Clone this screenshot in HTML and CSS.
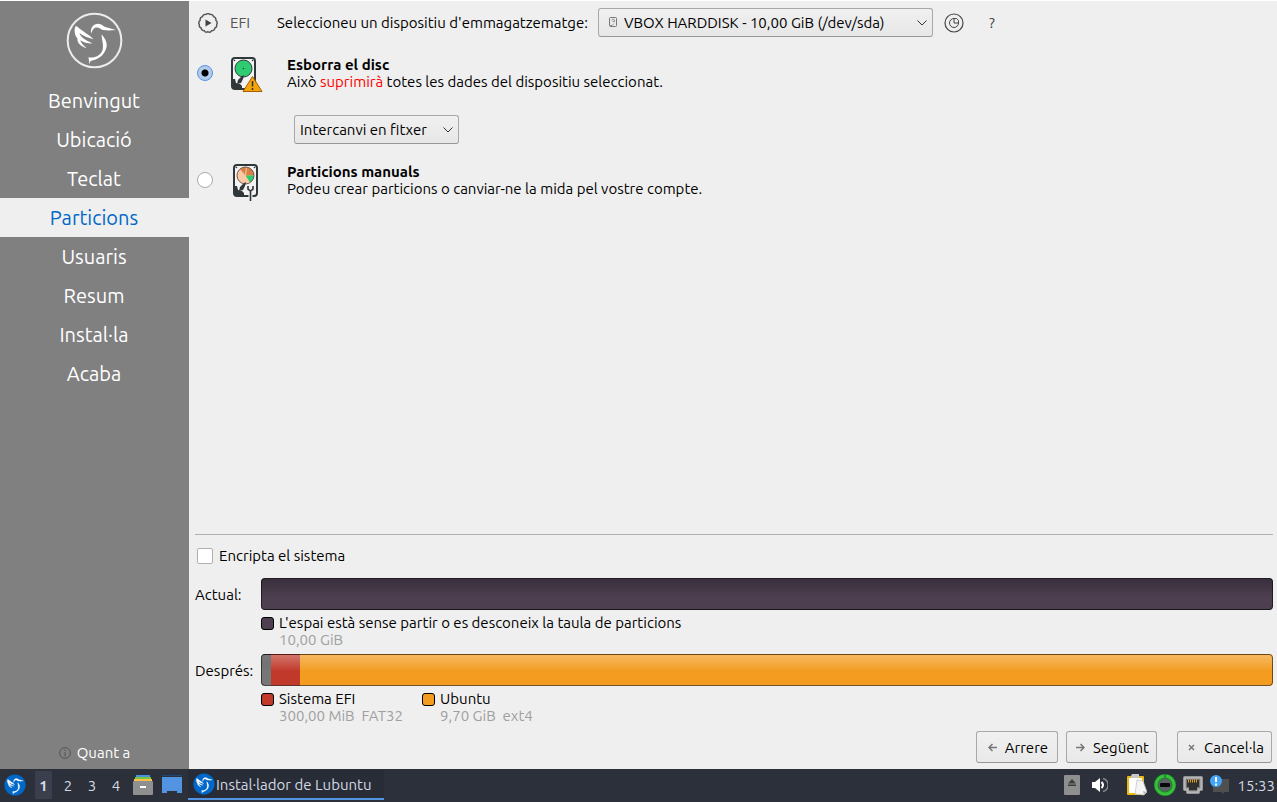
FILE: index.html
```html
<!DOCTYPE html>
<html lang="ca">
<head>
<meta charset="utf-8">
<title>Instal·lador de Lubuntu</title>
<link rel="stylesheet" href="styles.css">
</head>
<body>
<svg class="defs" aria-hidden="true">
  <symbol id="bird" viewBox="0 0 170 170">
    <path d="M75 65C72 46 82 35 96 35c10 0 15 7 21 10 12 4 20 5 32 9-14 1-26 2-38 0-8-3-12-9-20-8-8 0-12 7-16 19z"/>
    <path d="M106 66c14 16 19 30 13 45-7 19-23 31-46 35l-3 10-3-21c20 3 34-5 41-19 6-15-1-30-2-50z"/>
    <path d="M28 43c5-2 9 4 14 8 12 10 27 17 40 30-17-3-31-9-42-18 4 14 22 23 39 31-16 0-27-4-37-10 4 10 12 17 20 24C43 101 33 93 34 78c-9-9-10-27-6-35z"/>
  </symbol>
  <symbol id="disk" viewBox="0 0 32 38">
    <rect x="2" y="2" width="23" height="31" rx="3" fill="#f3f3f3" stroke="#30373b" stroke-width="2"/>
    <path d="M2 23h3l1 4 4 1 2 2v3H2z" fill="#30373b"/>
    <g fill="#30373b"><circle cx="4.500" cy="4.500" r=".8"/><circle cx="22.500" cy="4.500" r=".8"/></g>
  </symbol>
</svg>
<div class="window">
  <aside class="sidebar">
    <svg class="logo" viewBox="0 0 170 170" role="img" aria-label="Lubuntu"><circle cx="85" cy="85" r="80" fill="none" stroke="#ececec" stroke-width="6"/><use href="#bird" fill="#fff"/></svg>
    <ol class="steps">
      <li>Benvingut</li>
      <li>Ubicació</li>
      <li>Teclat</li>
      <li class="current" aria-current="step">Particions</li>
      <li>Usuaris</li>
      <li>Resum</li>
      <li>Instal·la</li>
      <li>Acaba</li>
    </ol>
    <button class="about" type="button">
      <svg width="12" height="12" viewBox="0 0 12 12" fill="none" stroke="#555"><circle cx="6" cy="6" r="5.4"/><path d="M6 2.5v1.5M6 5v4.500"/></svg>
      Quant a
    </button>
  </aside>
  <main class="content">
    <header class="toolbar">
      <svg class="gear" width="20" height="20" viewBox="0 0 20 20"><path d="M8 1.500Q10-.5 12 1.500Q14.900.900 15.500 3.700Q18.400 4.500 17.800 7.300Q20.200 9.200 18.600 11.400Q19.400 14.100 16.900 15Q16.500 17.900 13.700 17.700Q12 20.200 10 18.700Q7.500 20.100 6.300 17.700Q3.500 17.900 3.100 15Q.600 14.100 1.400 11.400Q-.2 9.200 2.200 7.300Q1.600 4.500 4.500 3.700Q5.100.900 8 1.500z" fill="none" stroke="#555" stroke-width="1.400"/><path d="M7.500 6.500v7l6-3.500z" fill="#444"/></svg>
      <span class="boot">EFI</span>
      <label class="device-label" for="device">Seleccioneu un dispositiu d'emmagatzematge:</label>
      <span class="combo device-combo">
        <svg class="combo-icon" width="8" height="10" viewBox="0 0 8 10" fill="none" stroke="#777"><rect x=".5" y=".5" width="7" height="9" rx="1"/><path d="M1 8.500h2L5 6.500M2.500 3q1.500-2 3 0v1.500h-2" stroke-width=".8"/></svg>
        <select id="device"><option>VBOX HARDDISK - 10,00 GiB (/dev/sda)</option></select>
        <svg class="chevron" width="10" height="6" viewBox="0 0 10 6"><path d="M.5.500 5 5 9.500.500" fill="none" stroke="#333"/></svg>
      </span>
      <svg class="table-type" width="20" height="20" viewBox="0 0 20 20" fill="none" stroke="#444"><circle cx="10" cy="10" r="9" stroke-width="1.200"/><path d="M10 5.500A4.500 4.500 0 1 0 14.500 10H10zM10 5.500h2.500l2 2V10"/></svg>
      <button class="help" type="button" aria-label="Ajuda">?</button>
    </header>

    <section class="choice">
      <input class="radio" type="radio" name="mode" id="erase" checked>
      <svg class="choice-icon" viewBox="0 0 34 38"><use href="#disk" width="32" height="38"/><circle cx="13.500" cy="12.500" r="8.500" fill="#2ecc71" stroke="#30373b"/><path d="M7 28l1-4 4-4 2-1-1 4-2 4z" fill="#30373b"/><circle cx="13.500" cy="12.500" r=".8" fill="#30373b"/><path d="M22.500 20.500 32 35.500H13z" fill="#f4a50b" stroke="#a65e00" stroke-linejoin="round"/><path d="M22.500 25v5.500M22.500 32v2" stroke="#333" stroke-width="1.500"/></svg>
      <label for="erase"><strong>Esborra el disc</strong><span>Això <em>suprimirà</em> totes les dades del dispositiu seleccionat.</span></label>
    </section>
    <div class="swap">
      <span class="combo swap-combo">
        <select aria-label="Intercanvi"><option>Intercanvi en fitxer</option></select>
        <svg class="chevron" width="10" height="6" viewBox="0 0 10 6"><path d="M.5.500 5 5 9.500.500" fill="none" stroke="#333"/></svg>
      </span>
    </div>
    <section class="choice">
      <input class="radio" type="radio" name="mode" id="manual">
      <svg class="choice-icon" viewBox="-2 0 34 38"><use href="#disk" width="32" height="38"/><circle cx="13.500" cy="12.500" r="8.500" fill="#fbc9a4"/><path d="M13.500 12.500 8 6a8.500 8.500 0 0 1 14 6.500z" fill="#d97f43"/><path d="M13.500 12.500H22a8.500 8.500 0 0 1-4 7z" fill="#2ecc71"/><path d="M13.500 12.500l1-8.500" stroke="#f7d2b6"/><circle cx="13.500" cy="12.500" r="8.500" fill="none" stroke="#6a5a50"/><path d="M7 28l1-4 4-4 2-1-1 4-2 4z" fill="#30373b"/><path d="M16 23v3l2.500 2 2.500-2v-3M18.500 28v10" fill="none" stroke="#eee" stroke-width="4"/><path d="M16 23v3l2.500 2 2.500-2v-3M18.500 28v10" fill="none" stroke="#30373b" stroke-width="1.600"/></svg>
      <label for="manual"><strong>Particions manuals</strong><span>Podeu crear particions o canviar-ne la mida pel vostre compte.</span></label>
    </section>

    <section class="preview">
      <div class="encrypt"><input type="checkbox" id="encrypt"><label for="encrypt">Encripta el sistema</label></div>
      <div class="layouts">
        <span class="row-label">Actual:</span>
        <div class="bar"><span class="free"></span></div>
        <ul class="legend">
          <li><i class="swatch free"></i><span>L'espai està sense partir o es desconeix la taula de particions</span><small>10,00 GiB</small></li>
        </ul>
        <span class="row-label">Després:</span>
        <div class="bar glossy"><span class="reserved"></span><span class="efi"></span><span class="root"></span></div>
        <ul class="legend">
          <li><i class="swatch efi"></i><span>Sistema EFI</span><small>300,00 MiB&nbsp; FAT32</small></li>
          <li><i class="swatch root"></i><span>Ubuntu</span><small>9,70 GiB&nbsp; ext4</small></li>
        </ul>
      </div>
    </section>
    <footer class="actions">
      <button type="button"><svg width="9" height="9" viewBox="0 0 9 9"><path d="M9 4.500H1M4.500 1 1 4.500 4.500 8"/></svg>Arrere</button>
      <button type="button"><svg width="9" height="9" viewBox="0 0 9 9"><path d="M0 4.500h8M4.500 1 8 4.500 4.500 8"/></svg>Següent</button>
      <button class="cancel" type="button"><svg width="9" height="9" viewBox="0 0 9 9"><path d="M2 2l5 5M7 2 2 7"/></svg>Cancel·la</button>
    </footer>
  </main>
</div>
<nav class="panel">
  <button class="menu" type="button" aria-label="Menú"><svg width="22" height="22" viewBox="0 0 170 170"><circle cx="85" cy="85" r="82" fill="#0068c8"/><use href="#bird" fill="#fff" stroke="#fff" stroke-width="2"/></svg></button>
  <div class="desktops">
    <button class="active" type="button">1</button><button type="button">2</button><button type="button">3</button><button type="button">4</button>
  </div>
  <button class="launcher" type="button" aria-label="Fitxers"><svg width="20" height="22" viewBox="0 0 20 22"><path d="M3 1h14v2H3z" fill="#4b8fe2"/><path d="M2 3h16v2H2z" fill="#72c83c"/><path d="M1 5h18v2H1z" fill="#fdbc4b"/><rect y="7" width="20" height="14" rx="1" fill="#8f8f8f"/><path d="M7 12h6v2H7z" fill="#fff"/></svg></button>
  <button class="launcher" type="button" aria-label="Escriptori"><svg width="20" height="20" viewBox="0 0 20 20"><path d="M0 0h20v1H0z" fill="#1e4775"/><path d="M0 2h20v16h-5v-2H5v2H0z" fill="#5294e2"/></svg></button>
  <button class="task" type="button"><svg width="22" height="22" viewBox="0 0 170 170"><circle cx="85" cy="85" r="82" fill="#0068c8"/><use href="#bird" fill="#fff" stroke="#fff" stroke-width="2"/></svg>Instal·lador de Lubuntu</button>
  <div class="tray">
    <svg width="16" height="20" viewBox="0 0 16 20"><rect width="16" height="20" rx="1" fill="#8f8f8f"/><path d="M8 4l4 4.500H4zM4 9.500h8v1.500H4z" fill="#3c3c3c"/></svg>
    <svg class="volume" width="16" height="16" viewBox="0 0 16 16"><path d="M0 5h3l5-4v14l-5-4H0z" fill="#fff"/><path d="M9.500 5q3 3 0 6" fill="none" stroke="#fff" stroke-width="2"/><path d="M11 1.500a6.700 6.700 0 0 1 0 13" fill="none" stroke="#888" stroke-width="1.500"/></svg>
    <svg width="20" height="22" viewBox="0 0 20 22"><rect y="2" width="17" height="19" rx="1" fill="#e9b90e"/><path d="M2 4h13v15H2z" fill="#fff"/><path d="M5 0h7v4H4V2z" fill="#c8c8c8"/><path d="M10 6l6 1 4 11-3 3-9-1z" fill="#f4f4f4" stroke="#bbb" stroke-width=".7"/><path d="M20 18l-4-1 1 4z" fill="#bbb"/></svg>
    <svg width="22" height="22" viewBox="0 0 22 22"><circle cx="11" cy="11" r="11" fill="#168a20"/><circle cx="11" cy="11" r="9" fill="none" stroke="#39bd3e" stroke-width="3"/><circle cx="11" cy="11" r="6.500" fill="#5c6265"/><rect x="6" y="9" width="10" height="4" rx="1" fill="#080808"/><path d="M11 0v4" stroke="#176421"/></svg>
    <svg width="20" height="18" viewBox="0 0 20 18"><path d="M1.500 1.500h17v12h-3v3h-11v-3h-3z" fill="#777" stroke="#b5b5b5" stroke-width="2.500" stroke-linejoin="round"/><path d="M4 4h12v7h-2v3H6v-3H4z" fill="#303030"/><path d="M5.500 3.500v3M7.500 3.500v3M9.500 3.500v3M11.500 3.500v3M13.500 3.500v3" stroke="#dda516"/></svg>
    <svg width="20" height="20" viewBox="0 0 20 20"><path d="M3 4h16v13h-4l-3 2v-2H3z" fill="#505050"/><circle cx="6" cy="6" r="6" fill="#42a5f5"/><path d="M6 2v5M6 8.500v2" stroke="#fff" stroke-width="2"/></svg>
    <time>15:33</time>
  </div>
</nav>
</body>
</html>
```
FILE: styles.css
```css
* { box-sizing: border-box; }
body {
  margin: 0;
  min-height: 100vh;
  display: flex;
  flex-direction: column;
  border-top: 1px solid #fff;
  background: #efefef;
  color: #000;
  font: 15px/17px Ubuntu, "Noto Sans", sans-serif;
  font-feature-settings: "locl" 0;
}
button, select { font: inherit; font-feature-settings: inherit; color: inherit; }
button { border: 0; padding: 0; background: none; }
svg { flex: none; display: block; }
.defs { position: absolute; width: 0; height: 0; }
ol, ul { list-style: none; margin: 0; padding: 0; }

.window { flex: 1; display: flex; }
.sidebar {
  width: 189px;
  flex: none;
  display: flex;
  flex-direction: column;
  background: #808080;
  color: #fff;
}
.logo { width: 57px; height: 57px; margin: 11px auto 12px; }
.steps li { height: 39px; padding-right: 1px; line-height: 39px; font-size: 20px; text-align: center; }
.steps .current { background: #efefef; color: #0068c8; }
.about { display: flex; align-items: center; justify-content: center; gap: 6px; margin: auto 0 8px; }

.content { flex: 1; min-width: 0; display: flex; flex-direction: column; padding: 6px 4px 6px 6px; }
.toolbar { display: flex; align-items: center; height: 31px; padding-left: 3px; }
.boot { width: 47px; margin-left: 12px; color: #555; }
.device-label { width: 314px; margin-right: 7px; white-space: nowrap; }
.combo { position: relative; display: block; }
.combo select {
  appearance: none;
  width: 100%;
  height: 29px;
  padding: 0 24px 0 5px;
  border: 1px solid #a8a8a8;
  border-bottom-color: #979797;
  border-radius: 3px;
  background: linear-gradient(#f0f0f0, #e7e7e7);
}
.device-combo { width: 335px; }
.device-combo select { padding-left: 25px; }
.combo-icon { position: absolute; left: 11px; top: 9px; }
.chevron { position: absolute; right: 6px; top: 12px; }
.table-type { margin-left: 11px; }
.help { margin-left: 25px; color: #444; }

.choice { display: flex; align-items: flex-start; padding-top: 17px; height: 60px; }
.radio {
  appearance: none;
  width: 16px;
  height: 16px;
  margin: 10px 17px 0 2px;
  border: 1px solid #aaa;
  border-radius: 50%;
  background: #fff;
}
.radio:checked { border-color: #5294e2; background: radial-gradient(circle, #000 0 3px, #b4cbeb 4px); }
.choice-icon { width: 34px; height: 38px; margin: 1px 23px 0 0; }
.choice label > * { display: block; }
.choice label { padding-top: 1px; }
.choice em { color: #f00; font-style: normal; }
.swap { padding: 17px 0 0 99px; height: 47px; }
.swap-combo { width: 165px; }

.preview { margin-top: auto; padding: 12px 0 1px; border-top: 1px solid #b1b1b1; }
.encrypt { display: flex; align-items: center; gap: 6px; padding-left: 2px; }
.encrypt input { appearance: none; width: 16px; height: 16px; margin: 0; border: 1px solid #b0b0b0; border-radius: 2px; background: #fff; }
.layouts { display: grid; grid-template-columns: 66px 1fr; margin-top: 14px; }
.row-label { align-self: center; white-space: nowrap; }
.bar {
  display: flex;
  height: 32px;
  border-radius: 4px;
  overflow: hidden;
  position: relative;
}
.bar::after {
  content: "";
  position: absolute;
  inset: 0;
  border: 1px solid rgb(0 0 0 / 55%);
  border-radius: 4px;
  background: linear-gradient(rgb(0 0 0 / 25%), rgb(0 0 0 / 0%) 60%);
}
.bar.glossy::after { background: linear-gradient(rgb(255 255 255 / 30%), rgb(255 255 255 / 0%) 55%); }
.free { flex: 1; background: #4d3f50; }
.reserved { width: 10px; background: linear-gradient(#3c3c3c, #777 55%); }
.efi { width: 29px; background: #c0392b; }
.root { flex: 1; background: #f39c1f; }
.legend { grid-column: 2; display: flex; gap: 19px; height: 44px; padding-top: 4px; }
.legend li { display: grid; grid-template-columns: 13px auto; column-gap: 5px; align-content: start; align-items: end; }
.legend small { grid-column: 2; font-size: 15px; color: #a0a0a0; }
.swatch { width: 13px; height: 13px; margin-bottom: 1px; border: 1px solid #000; border-radius: 3px; }

.actions { display: flex; justify-content: flex-end; gap: 8px; padding: 0 1px; }
.actions button {
  min-width: 82px;
  height: 32px;
  display: flex;
  align-items: center;
  justify-content: center;
  gap: 8px;
  padding: 0 7px 0 9px;
  border: 1px solid #a8a8a8;
  border-bottom-color: #979797;
  border-radius: 3px;
  background: linear-gradient(#f0f0f0, #e9e9e9);
}
.actions .cancel { margin-left: 12px; }
.actions path { fill: none; stroke: #777; stroke-width: 1.5px; }

.panel { height: 33px; display: flex; align-items: center; padding-bottom: 1px; background: #2b303b; color: #d3dae3; }
.menu { margin: 0 9px 0 4px; }
.desktops { display: flex; }
.desktops button { width: 24px; height: 28px; }
.desktops button.active { width: 17px; margin-right: 4px; background: #3b3e4d; font-weight: 700; }
.launcher { margin-left: 9px; }
.desktops + .launcher { margin-left: 5px; }
.task { width: 196px; height: 30px; display: flex; align-items: center; gap: 1px; margin-left: 6px; padding-left: 5px; border-bottom: 2px solid #5294e2; background: #282c36; white-space: nowrap; }
.tray { margin-left: auto; display: flex; align-items: center; gap: 7px; padding-right: 2px; }
.volume { margin: 0 12px 0 5px; }
```
